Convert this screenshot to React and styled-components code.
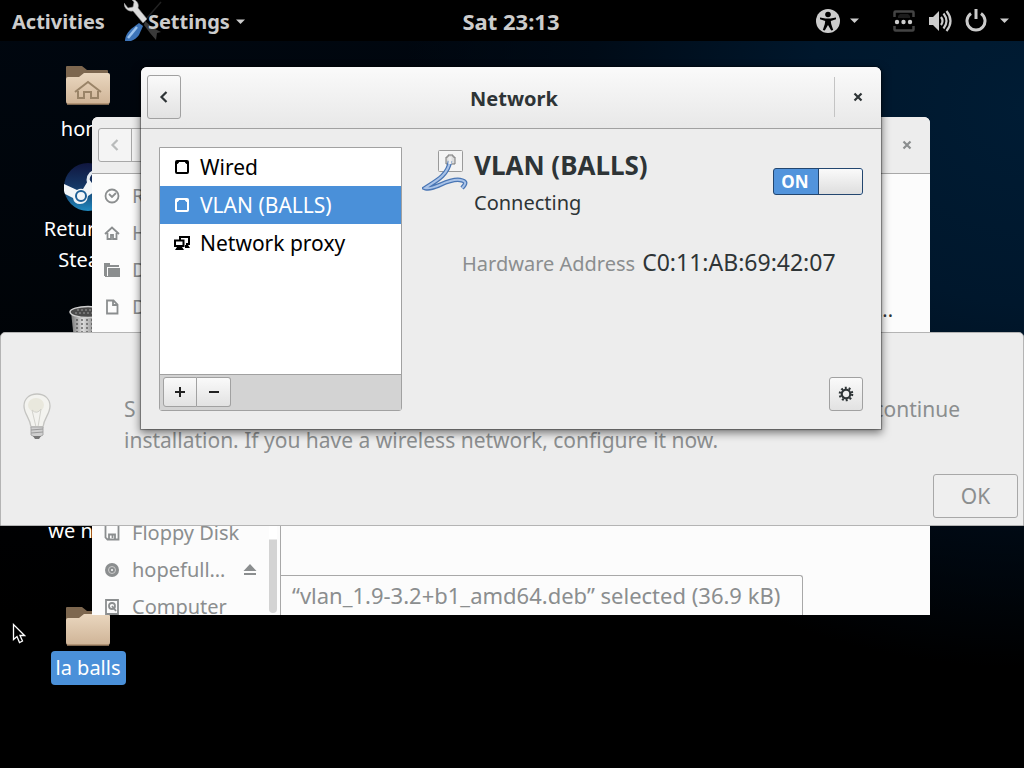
import { useState } from "react";
import styled, { createGlobalStyle } from "styled-components";

const GlobalStyle = createGlobalStyle`
  * {
    box-sizing: border-box;
  }
  body {
    margin: 0;
    background: #000;
    font-family: "Noto Sans", "Open Sans", sans-serif;
    font-size: 20px;
    line-height: 31px;
    color: #2e3436;
  }
  button {
    font: inherit;
    color: inherit;
    padding: 0;
  }
  svg {
    display: block;
    flex-shrink: 0;
  }
`;

const Screen = styled.div`
  display: flex;
  flex-direction: column;
  min-height: 100vh;
  overflow: hidden;
  position: relative;
  background: radial-gradient(
      ellipse 620px 560px at 100% 14%,
      #001c34 0%,
      #00172c 35%,
      #000b17 70%,
      transparent 100%
    ),
    linear-gradient(#000710 0%, #000306 50%, #000 80%);
`;

/* top panel */
const TopBar = styled.header`
  display: grid;
  grid-template-columns: 1fr auto 1fr;
  align-items: center;
  height: 41px;
  padding: 0 14px 0 12px;
  background: #000;
  color: #ccc;
  font-weight: 700;
`;
const TopGroup = styled.div`
  display: flex;
  align-items: center;
  justify-content: ${(p) => (p.$end ? "flex-end" : "flex-start")};
  gap: ${(p) => p.$gap || 0}px;
`;
const TopButton = styled.button`
  display: flex;
  align-items: center;
  gap: ${(p) => p.$gap || 0}px;
  height: 41px;
  padding-top: ${(p) => (p.$text ? 2 : 0)}px;
  border: none;
  background: none;
`;
const Clock = styled(TopButton)`
  font-size: 22px;
`;
const AppIcon = styled.span`
  width: 24px;
`;

/* desktop icons */
const Desktop = styled.main`
  display: flex;
  flex-direction: column;
  width: 176px;
  padding-top: 24px;
  color: #fff;
`;
const DesktopItem = styled.div`
  display: flex;
  flex-direction: column;
  align-items: center;
  gap: ${(p) => p.$gap || 4}px;
  height: ${(p) => p.$height}px;
  text-align: center;
`;
const DesktopLabel = styled.span`
  max-width: 104px;
  padding: 0 5px;
  border-radius: 4px;
  line-height: ${(p) => (p.$selected ? 34 : 31)}px;
  background: ${(p) => (p.$selected ? "#4a90d9" : "transparent")};
`;

/* windows */
const FilesWindow = styled.section`
  position: absolute;
  left: 92px;
  top: 117px;
  width: 838px;
  height: 498px;
  display: flex;
  flex-direction: column;
  overflow: hidden;
  border-radius: 6px 6px 0 0;
  background: #fcfcfc;
  color: #8b8e8f;
`;
const FilesHeader = styled.header`
  display: flex;
  align-items: center;
  justify-content: space-between;
  height: 57px;
  padding: 0 16px 0 6px;
  background: #ededed;
  border-bottom: 1px solid #a8a8a8;
`;
const PathButtons = styled.div`
  display: flex;
  border: 1px solid #a8a8a8;
  border-radius: 3px;
  background: #f4f4f4;
  color: #b9bbbb;
`;
const PathButton = styled.button`
  display: grid;
  place-items: center;
  width: 32px;
  height: 32px;
  border: none;
  background: none;
  & + & {
    border-left: 1px solid #a8a8a8;
  }
`;
const CloseButton = styled.button`
  display: grid;
  place-items: center;
  width: ${(p) => p.$width || 14}px;
  height: 40px;
  border: none;
  background: none;
`;
const FilesBody = styled.div`
  display: flex;
  flex: 1;
  min-height: 0;
`;
const Sidebar = styled.nav`
  display: flex;
  flex-direction: column;
  justify-content: space-between;
  width: 177px;
  padding-top: 3px;
  margin-bottom: -10px;
`;
const PlaceList = styled.div`
  display: flex;
  flex-direction: column;
`;
const Place = styled.a`
  display: flex;
  align-items: center;
  gap: 12px;
  height: 37px;
  padding: 0 12px;
  color: inherit;
  text-decoration: none;
`;
const PlaceName = styled.span`
  flex: 1;
`;
const ScrollTrack = styled.div`
  display: flex;
  align-items: flex-start;
  width: 12px;
  padding: 0 1px 2px 0;
  border-right: 1px solid #a8a8a8;
  &::before {
    content: "";
    width: 8px;
    height: 100%;
    border-radius: 4px;
    background: linear-gradient(#fff 365px, #d3d3d3 366px);
  }
`;
const FilesView = styled.div`
  display: flex;
  flex-direction: column;
  justify-content: space-between;
  flex: 1;
`;
const FileName = styled.span`
  align-self: flex-end;
  padding: 120px 37px 0 0;
  color: #2e3436;
`;
const StatusBar = styled.div`
  align-self: flex-start;
  height: 40px;
  padding: 4px 22px 4px 11px;
  border: 1px solid #a8a8a8;
  border-width: 1px 1px 0 0;
  border-top-right-radius: 3px;
  font-size: 22px;
`;

const InfoDialog = styled.section`
  position: absolute;
  left: 0;
  right: 0;
  top: 332px;
  display: flex;
  flex-direction: column;
  height: 194px;
  padding: 60px 5px 7px 22px;
  background: #ededed;
  border: 1px solid #b4b4b4;
  border-radius: 5px 5px 0 0;
  color: #8b8e8f;
`;
const InfoContent = styled.div`
  display: flex;
  gap: 73px;
  flex: 1;
`;
const InfoText = styled.p`
  display: flex;
  flex-direction: column;
  width: 836px;
  margin: 1px 0 0;
  font-size: 21px;
`;
const InfoLine = styled.span`
  display: flex;
  justify-content: space-between;
`;
const OkButton = styled.button`
  align-self: flex-end;
  width: 85px;
  height: 44px;
  border: 1px solid #a8a8a8;
  border-radius: 3px;
  background: #efefef;
  font-size: 21px;
`;

const NetworkWindow = styled.section`
  position: absolute;
  left: 141px;
  top: 67px;
  width: 740px;
  display: flex;
  flex-direction: column;
  border-radius: 6px 6px 0 0;
  background: #ededed;
  box-shadow: 0 0 1px 1px rgba(0, 0, 0, 0.35), 0 3px 9px 1px rgba(0, 0, 0, 0.5);
`;
const TitleBar = styled.header`
  display: grid;
  grid-template-columns: 1fr auto 1fr;
  align-items: center;
  height: 62px;
  padding: 0 0 2px 6px;
  border-bottom: 1px solid #a1a1a1;
  border-radius: 6px 6px 0 0;
  background: linear-gradient(#fafafa, #e8e8e8);
`;
const Title = styled.h1`
  margin: 0;
  padding-top: 3px;
  font-size: 20px;
  font-weight: 700;
`;
const TitleEnd = styled.div`
  justify-self: end;
  border-left: 1px solid #c4c4c4;
`;
const GtkButton = styled.button`
  display: grid;
  place-items: center;
  width: 34px;
  height: ${(p) => p.$height || 34}px;
  border: 1px solid #a1a1a1;
  border-radius: 3px;
  background: linear-gradient(#fafafa, #e2e2e2);
`;
const NetworkBody = styled.div`
  display: flex;
  gap: 20px;
  padding: 18px;
`;
const DevicePanel = styled.div`
  display: flex;
  flex-direction: column;
  width: 243px;
  height: 264px;
  border: 1px solid #a1a1a1;
  border-radius: 0 0 3px 3px;
  background: #fff;
`;
const DeviceList = styled.div`
  flex: 1;
`;
const Device = styled.button`
  display: flex;
  align-items: center;
  gap: 10px;
  width: 100%;
  height: 38px;
  padding-left: 14px;
  border: none;
  background: ${(p) => (p.$selected ? "#4a90d9" : "#fff")};
  color: ${(p) => (p.$selected ? "#fff" : "#000")};
  font-size: 21px;
`;
const DeviceToolbar = styled.div`
  display: flex;
  height: 36px;
  padding: 2px 3px;
  border-top: 1px solid #a1a1a1;
  background: #d3d3d3;
`;
const ToolButton = styled(GtkButton)`
  height: 30px;
  border-radius: 3px 0 0 3px;
  & + & {
    border-left: none;
    border-radius: 0 3px 3px 0;
  }
`;
const Details = styled.div`
  display: flex;
  flex-direction: column;
  flex: 1;
`;
const DetailsHead = styled.div`
  display: flex;
  gap: 6px;
`;
const DeviceTitle = styled.div`
  flex: 1;
`;
const DeviceName = styled.h2`
  margin: 0 0 3px;
  font-size: 26px;
  line-height: 37px;
  font-weight: 700;
`;
const Switch = styled.label`
  display: flex;
  width: 90px;
  height: 27px;
  margin-top: 21px;
  border: 1px solid #23466f;
  border-radius: 3px;
  overflow: hidden;
  background: #5294dc;
  color: #fff;
  font-size: 17px;
  line-height: 25px;
  font-weight: 700;
  text-align: center;
  input {
    appearance: none;
    order: 1;
    flex: 1;
    margin: 0;
    border-left: 1px solid #23466f;
    background: linear-gradient(#fafafa, #dedede);
  }
  input:not(:checked) {
    order: 0;
  }
`;
const SwitchText = styled.span`
  width: 44px;
  padding-right: 2px;
`;
const Address = styled.dl`
  display: flex;
  align-items: baseline;
  gap: 7px;
  margin: 29px 0 0 40px;
  dt {
    color: #8b8e8f;
  }
  dd {
    margin: 0;
    font-size: 23px;
  }
`;
const DetailsFoot = styled.div`
  display: flex;
  justify-content: flex-end;
  margin-top: auto;
`;

const Pointer = styled.svg`
  position: absolute;
  left: 12px;
  top: 623px;
`;

const Caret = () => (
  <svg width="10" height="6" viewBox="0 0 10 6">
    <path d="M0 0.5h9L4.500 5z" fill="currentColor" />
  </svg>
);

const Chevron = () => (
  <svg width="10" height="14" viewBox="0 0 10 14" fill="none">
    <path d="M7.500 2L2.500 7l5 5" stroke="currentColor" strokeWidth="2.200" />
  </svg>
);

const Cross = () => (
  <svg width="10" height="10" viewBox="0 0 10 10">
    <path d="M1.500 1.500l7 7M8.500 1.500l-7 7" stroke="currentColor" strokeWidth="2.200" />
  </svg>
);

const ToolsIcon = () => (
  <svg width="38" height="41" viewBox="0 0 38 41">
    <path d="M37 2L23 18" stroke="#222" strokeWidth="1.500" />
    <path d="M21 21l8 7 8 4-4 1-1 7-6-7-6-8z" fill="#3a3a3a" />
    <path
      d="M0 3l4 5 5-1 1-5-2-2h3c3 2 4 5 3 8l9 11-4 4L9 11C4 12 0 8 0 3z"
      fill="#dcdcdc"
      stroke="#8f8f8f"
      strokeWidth="0.600"
    />
    <path d="M15 23l4 3-4 9c-2 3-5 5-8 6H1c0-5 3-9 6-12z" fill="#3d74b8" />
    <path d="M13 27L4 38" stroke="#9cc3ee" strokeWidth="2.500" />
  </svg>
);

const AccessIcon = () => (
  <svg width="24" height="24" viewBox="0 0 24 24">
    <circle cx="12" cy="12" r="12" fill="#ccc" />
    <circle cx="12" cy="5.500" r="2.800" fill="#000" />
    <path
      d="M4 8.500l5.500 1h5l5.500-1v1.800L14.800 12l.4 3 2 6-2 .5L12 16l-3.200 5.500-2-.5 2-6 .4-3L4 10.300z"
      fill="#000"
    />
  </svg>
);

const WiredBusyIcon = () => (
  <svg width="22" height="22" viewBox="0 0 22 22">
    <path
      d="M1.500 7V2.500q0-1 1-1h17q1 0 1 1V7M1.500 16v3.500q0 1 1 1h17q1 0 1-1V16"
      fill="none"
      stroke="#444"
      strokeWidth="2.500"
    />
    <path d="M5 8V6l2-2h8l2 2v2z" fill="#1c1c1c" />
    <circle cx="4" cy="12" r="2.200" fill="#ccc" />
    <circle cx="10.500" cy="12" r="2.200" fill="#ccc" />
    <circle cx="17" cy="12" r="2.200" fill="#ccc" />
  </svg>
);

const VolumeIcon = () => (
  <svg width="24" height="24" viewBox="0 0 24 24">
    <path d="M1 8h4l6-6v20l-6-6H1z" fill="#ccc" />
    <path
      d="M13 8q3 4 0 8M15.500 4.500q6 7.500 0 15M18.500 2q8 10 0 20"
      fill="none"
      stroke="#ccc"
      strokeWidth="2.200"
    />
  </svg>
);

const PowerIcon = () => (
  <svg width="22" height="24" viewBox="0 0 22 24" fill="none" stroke="#ccc" strokeWidth="3">
    <path d="M6 4.500a9 9 0 1 0 10 0M11 0v10" />
  </svg>
);

const FolderIcon = ({ house }) => (
  <svg width="46" height="41" viewBox="0 0 46 41">
    <path d="M1 2q0-1 1-1h15l5 4h20q1 0 1 1v12H1z" fill="#7d674f" />
    <path d="M1 14q0-2 2-2h11l5-4h24q2 0 2 2v26q0 3-2 3H3q-2 0-2-3z" fill="url(#folder)" />
    <path d="M2 39h42" stroke="#a98a6a" strokeWidth="1.500" />
    {house && (
      <path
        d="M10 27l13-10 13 10M13 26v7h6v-6h7v6h7v-7"
        fill="none"
        stroke="#9a8468"
        strokeWidth="2"
      />
    )}
    <defs>
      <linearGradient id="folder" x2="0" y2="1">
        <stop stopColor="#ead7bf" />
        <stop offset="1" stopColor="#cfb497" />
      </linearGradient>
    </defs>
  </svg>
);

const SteamIcon = () => (
  <svg width="48" height="48" viewBox="0 0 48 48">
    <defs>
      <linearGradient id="steam" x2="0" y2="1">
        <stop stopColor="#10163f" />
        <stop offset="0.500" stopColor="#153866" />
        <stop offset="1" stopColor="#2089bf" />
      </linearGradient>
    </defs>
    <circle cx="24" cy="24" r="24" fill="url(#steam)" />
    <circle cx="33" cy="17" r="9" fill="none" stroke="#e4eaf0" strokeWidth="3" />
    <path d="M0 21l13 6q3-2 6-1l6-10 8 11-9 6q-1 8-8 8-6 0-7-6l-8-4q-2-5-1-10z" fill="#f2f5f8" />
    <circle cx="17" cy="33" r="5" fill="none" stroke="#1d5f96" strokeWidth="2" />
  </svg>
);

const TrashIcon = () => (
  <svg width="38" height="46" viewBox="0 0 38 46">
    <defs>
      <linearGradient id="bin">
        <stop stopColor="#777" />
        <stop offset="0.350" stopColor="#ddd" />
        <stop offset="1" stopColor="#444" />
      </linearGradient>
    </defs>
    <path d="M2 7l4 37h26l4-37z" fill="url(#bin)" />
    <path d="M8 14v30M13 14v30M18 14v30M23 14v30" stroke="#333" strokeDasharray="2 2" />
    <ellipse cx="19" cy="7" rx="18" ry="5.500" fill="#4a4a4a" stroke="#d0d0d0" strokeWidth="1.500" />
    <path d="M6 8h26M8 5h22" stroke="#999" strokeDasharray="2 2" />
  </svg>
);

const BulbIcon = () => (
  <svg width="28" height="48" viewBox="0 0 28 48">
    <path
      d="M14 1C6 1 1 6 1 13c0 8 6 12 7 21h12c1-9 7-13 7-21C27 6 22 1 14 1z"
      fill="#f3f3ef"
      stroke="#c4c4c1"
      strokeWidth="1.300"
    />
    <ellipse cx="13" cy="12" rx="8" ry="7" fill="#e9e8dd" />
    <path d="M9 17l4 17M18 16l-3 18M9 17q5 5 9-1" fill="none" stroke="#d2d2cc" />
    <path d="M8 34h12v8q-6 4-12 0z" fill="#d0d0d0" stroke="#a8a8a8" />
    <path d="M8 37l12-1M8 40l12-1" stroke="#9a9a9a" />
    <path d="M10 43h8l-2 3h-4z" fill="#777" />
  </svg>
);

const placePaths = {
  recent: (
    <>
      <circle cx="8" cy="8" r="6.500" />
      <path d="M5 6l3 3 4-4" />
    </>
  ),
  home: <path d="M1 9l7-6.500L15 9M3.500 8v6H7v-4h2v4h3.500V8" />,
  folder: (
    <>
      <path d="M0 1h6v2h9v2H3v9H0z" fill="currentColor" stroke="none" />
      <path d="M4 6h12v9H1v-1h3z" fill="currentColor" stroke="none" />
    </>
  ),
  file: <path d="M3 1.500h6.500l4 4v9H3zM9 2v4h4" />,
  floppy: <path d="M1.500 1v11.500l2 2h11V1M5 14V9.500h6V14M8.500 10v3" />,
  disc: (
    <>
      <circle cx="8" cy="8" r="7" fill="currentColor" stroke="none" />
      <circle cx="8" cy="8" r="3.500" stroke="#ccc" strokeWidth="1" />
      <circle cx="8" cy="8" r="1" fill="#fff" stroke="none" />
    </>
  ),
  drive: (
    <>
      <path d="M2 1h12v14H2z" />
      <circle cx="8" cy="7" r="3" />
      <path d="M8 7l4 5" />
    </>
  ),
};

const PlaceIcon = ({ name }) => (
  <svg width="16" height="16" viewBox="0 0 16 16" fill="none" stroke="currentColor" strokeWidth="1.800">
    {placePaths[name]}
  </svg>
);

const EjectIcon = () => (
  <svg width="14" height="12" viewBox="0 0 14 12" fill="currentColor">
    <path d="M7 0l6.500 7H.5zM1 9h12v2H1z" />
  </svg>
);

const DeviceIcon = ({ type }) => (
  <svg width="16" height="16" viewBox="0 0 16 16" fill="none" stroke="currentColor" strokeWidth="2">
    {type === "proxy" ? (
      <>
        <path d="M6 4.500V2h9v7h-3M1 5.500h8.500V11H1z" />
        <path d="M3 12h5l2 3H1zM11 10h3l2 3h-5z" fill="currentColor" stroke="none" />
      </>
    ) : (
      <>
        <rect x="2" y="2" width="12" height="12" rx="1" />
        <path d="M2 2h3v1.500L3.500 5H2zM14 2h-3v1.500L12.500 5H14z" fill="currentColor" stroke="none" />
      </>
    )}
  </svg>
);

const CableIcon = () => (
  <svg width="46" height="46" viewBox="0 0 46 46" fill="none">
    <rect x="16.500" y="3.500" width="24" height="21" rx="1" fill="#f4f4f4" stroke="#9a9a9a" />
    <path d="M24 17v-7h2V8h5v2h2v7z" fill="#ddd" stroke="#777" />
    <path
      d="M28 14C26 29 12 35 3 41c9 3 22-10 35-8 6 1 7 3 2 8"
      stroke="#4a76b4"
      strokeWidth="4.500"
    />
    <path
      d="M28 14C26 29 12 35 3 41c9 3 22-10 35-8 6 1 7 3 2 8"
      stroke="#a9c3e8"
      strokeWidth="2"
    />
    <path d="M28 10v7" stroke="#eee" strokeWidth="3" />
  </svg>
);

const GearIcon = () => (
  <svg width="16" height="16" viewBox="0 0 16 16" fill="none" stroke="currentColor">
    <circle cx="8" cy="8" r="4.300" strokeWidth="2.200" />
    <circle cx="8" cy="8" r="6.200" strokeWidth="2.200" strokeDasharray="1.948 1.947" />
  </svg>
);

const SignIcon = ({ plus }) => (
  <svg width="12" height="12" viewBox="0 0 12 12" stroke="#222" strokeWidth="2">
    <path d={plus ? "M1 6h10M6 1v10" : "M1 6h10"} />
  </svg>
);

const devices = [
  { id: "wired", name: "Wired", type: "wired" },
  { id: "vlan", name: "VLAN (BALLS)", type: "wired" },
  { id: "proxy", name: "Network proxy", type: "proxy" },
];

const userPlaces = [
  { name: "Recent", icon: "recent" },
  { name: "Home", icon: "home" },
  { name: "Desktop", icon: "folder" },
  { name: "Documents", icon: "file" },
];

const drives = [
  { name: "Floppy Disk", icon: "floppy" },
  { name: "hopefull…", icon: "disc", eject: true },
  { name: "Computer", icon: "drive" },
];

const Places = ({ items }) => (
  <PlaceList>
    {items.map((item) => (
      <Place href="#" key={item.name}>
        <PlaceIcon name={item.icon} />
        <PlaceName>{item.name}</PlaceName>
        {item.eject && <EjectIcon />}
      </Place>
    ))}
  </PlaceList>
);

const Network = () => {
  const [selected, setSelected] = useState("vlan");
  const [enabled, setEnabled] = useState(true);
  const device = devices.find((d) => d.id === selected);
  return (
    <NetworkWindow>
      <TitleBar>
        <GtkButton $height={44} aria-label="Back">
          <Chevron />
        </GtkButton>
        <Title>Network</Title>
        <TitleEnd>
          <CloseButton $width={46} aria-label="Close">
            <Cross />
          </CloseButton>
        </TitleEnd>
      </TitleBar>
      <NetworkBody>
        <DevicePanel>
          <DeviceList>
            {devices.map((d) => (
              <Device key={d.id} $selected={d.id === selected} onClick={() => setSelected(d.id)}>
                <DeviceIcon type={d.type} />
                {d.name}
              </Device>
            ))}
          </DeviceList>
          <DeviceToolbar>
            <ToolButton aria-label="Add">
              <SignIcon plus />
            </ToolButton>
            <ToolButton aria-label="Remove">
              <SignIcon />
            </ToolButton>
          </DeviceToolbar>
        </DevicePanel>
        <Details>
          <DetailsHead>
            <CableIcon />
            <DeviceTitle>
              <DeviceName>{device.name}</DeviceName>
              Connecting
            </DeviceTitle>
            <Switch>
              <SwitchText>{enabled ? "ON" : "OFF"}</SwitchText>
              <input
                type="checkbox"
                checked={enabled}
                onChange={(e) => setEnabled(e.target.checked)}
              />
            </Switch>
          </DetailsHead>
          <Address>
            <dt>Hardware Address</dt>
            <dd>C0:11:AB:69:42:07</dd>
          </Address>
          <DetailsFoot>
            <GtkButton aria-label="Options">
              <GearIcon />
            </GtkButton>
          </DetailsFoot>
        </Details>
      </NetworkBody>
    </NetworkWindow>
  );
};

const Files = () => (
  <FilesWindow>
    <FilesHeader>
      <PathButtons>
        <PathButton aria-label="Back">
          <Chevron />
        </PathButton>
        <PathButton aria-label="Forward" />
      </PathButtons>
      <CloseButton aria-label="Close files">
        <Cross />
      </CloseButton>
    </FilesHeader>
    <FilesBody>
      <Sidebar>
        <Places items={userPlaces} />
        <Places items={drives} />
      </Sidebar>
      <ScrollTrack />
      <FilesView>
        <FileName>...</FileName>
        <StatusBar>“vlan_1.9-3.2+b1_amd64.deb” selected (36.9 kB)</StatusBar>
      </FilesView>
    </FilesBody>
  </FilesWindow>
);

const App = () => (
  <Screen>
    <GlobalStyle />
    <TopBar>
      <TopGroup $gap={19}>
        <TopButton $text>Activities</TopButton>
        <TopButton>
          <AppIcon>
            <ToolsIcon />
          </AppIcon>
          <TopButton as="span" $text $gap={6}>
            Settings
            <Caret />
          </TopButton>
        </TopButton>
      </TopGroup>
      <Clock $text>Sat 23:13</Clock>
      <TopGroup $end $gap={33}>
        <TopButton $gap={10} aria-label="Accessibility">
          <AccessIcon />
          <Caret />
        </TopButton>
        <TopButton $gap={13} aria-label="System">
          <WiredBusyIcon />
          <VolumeIcon />
          <PowerIcon />
          <Caret />
        </TopButton>
      </TopGroup>
    </TopBar>
    <Desktop>
      <DesktopItem $height={98} $gap={7}>
        <FolderIcon house />
        <DesktopLabel>home</DesktopLabel>
      </DesktopItem>
      <DesktopItem $height={142} $gap={2}>
        <SteamIcon />
        <DesktopLabel>Return to Steam</DesktopLabel>
      </DesktopItem>
      <DesktopItem $height={210}>
        <TrashIcon />
      </DesktopItem>
      <DesktopItem $height={91}>
        <DesktopLabel>we need</DesktopLabel>
      </DesktopItem>
      <DesktopItem $height={90}>
        <FolderIcon />
        <DesktopLabel $selected>la balls</DesktopLabel>
      </DesktopItem>
    </Desktop>
    <Files />
    <InfoDialog>
      <InfoContent>
        <BulbIcon />
        <InfoText>
          <InfoLine>
            <span>S</span>
            <span>continue</span>
          </InfoLine>
          <InfoLine>installation. If you have a wireless network, configure it now.</InfoLine>
        </InfoText>
      </InfoContent>
      <OkButton>OK</OkButton>
    </InfoDialog>
    <Network />
    <Pointer width="14" height="21" viewBox="0 0 14 21">
      <path
        d="M1.500 1.500v15l3.500-3 2.500 6 3-1.500-2.500-5.500h4.500z"
        fill="#000"
        stroke="#fff"
        strokeWidth="1.300"
      />
    </Pointer>
  </Screen>
);

export default App;
